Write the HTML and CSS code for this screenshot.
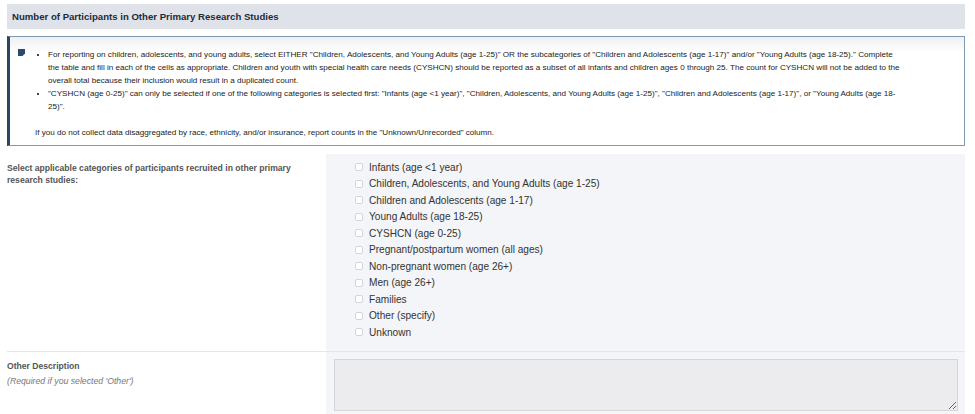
FILE: index.html
```html
<!DOCTYPE html>
<html lang="en">
<head>
  <meta charset="UTF-8">
  <meta name="viewport" content="width=device-width, initial-scale=1.0">
  <title>Number of Participants in Other Primary Research Studies</title>
  <link rel="stylesheet" href="styles.css">
</head>
<body>
  <div class="panel">
    <div class="panel-heading">Number of Participants in Other Primary Research Studies</div>

    <div class="instructions">
      <svg class="note-icon" width="7" height="7" viewBox="0 0 7 7" aria-hidden="true">
        <path d="M0 0H7V4.5L4.5 7H0Z" fill="#2b4a72"/>
      </svg>
      <div class="instructions-body">
        <ul>
          <li>For reporting on children, adolescents, and young adults, select EITHER "Children, Adolescents, and Young Adults (age 1-25)" OR the subcategories of "Children and Adolescents (age 1-17)" and/or "Young Adults (age 18-25)." Complete the table and fill in each of the cells as appropriate. Children and youth with special health care needs (CYSHCN) should be reported as a subset of all infants and children ages 0 through 25. The count for CYSHCN will not be added to the overall total because their inclusion would result in a duplicated count.</li>
          <li>"CYSHCN (age 0-25)" can only be selected if one of the following categories is selected first: "Infants (age &lt;1 year)", "Children, Adolescents, and Young Adults (age 1-25)", "Children and Adolescents (age 1-17)", or "Young Adults (age 18-25)".</li>
        </ul>
        <p>If you do not collect data disaggregated by race, ethnicity, and/or insurance, report counts in the "Unknown/Unrecorded" column.</p>
      </div>
    </div>

    <div class="form-row">
      <div class="form-label">
        <label>Select applicable categories of participants recruited in other primary research studies:</label>
      </div>
      <div class="form-field">
        <label class="check"><input type="checkbox"> Infants (age &lt;1 year)</label>
        <label class="check"><input type="checkbox"> Children, Adolescents, and Young Adults (age 1-25)</label>
        <label class="check"><input type="checkbox"> Children and Adolescents (age 1-17)</label>
        <label class="check"><input type="checkbox"> Young Adults (age 18-25)</label>
        <label class="check"><input type="checkbox"> CYSHCN (age 0-25)</label>
        <label class="check"><input type="checkbox"> Pregnant/postpartum women (all ages)</label>
        <label class="check"><input type="checkbox"> Non-pregnant women (age 26+)</label>
        <label class="check"><input type="checkbox"> Men (age 26+)</label>
        <label class="check"><input type="checkbox"> Families</label>
        <label class="check"><input type="checkbox"> Other (specify)</label>
        <label class="check"><input type="checkbox"> Unknown</label>
      </div>
    </div>

    <div class="form-row bordered">
      <div class="form-label">
        <label>Other Description</label>
        <span class="hint">(Required if you selected 'Other')</span>
      </div>
      <div class="form-field">
        <textarea class="other-text" disabled></textarea>
      </div>
    </div>
  </div>
</body>
</html>
```

FILE: styles.css
```css
body {
  margin: 0;
  padding: 4px 10px 0 7px;
  font-family: "Liberation Sans", Arial, sans-serif;
  color: #333;
  background: #fff;
}

.panel-heading {
  background-color: #dfe2e8;
  color: #1c2b3b;
  font-size: 9.6px;
  font-weight: bold;
  height: 25px;
  line-height: 25px;
  padding-left: 5px;
}

.instructions {
  display: flex;
  margin-top: 7px;
  border: 1.5px solid #7e98ae;
  border-left: 3px solid #2a4660;
  background: linear-gradient(#eef0f2, #fff 16px);
  padding: 11px 63px 6px 8px;
  font-size: 8.1px;
  line-height: 13px;
  color: #222;
}

.note-icon {
  flex: none;
  margin-top: 1px;
}

.instructions-body {
  flex: 1;
  padding-left: 4px;
}

.instructions ul {
  margin: 0;
  padding-left: 19px;
  list-style: square;
}

.instructions li::marker {
  font-size: 7px;
  color: #444;
}

.instructions p {
  margin: 13px 0 0 6px;
}

.form-row {
  display: flex;
  margin-top: 8px;
}

.form-row.bordered {
  margin-top: 0;
  border-top: 1px solid #e4e6ea;
}

.form-label {
  width: 319px;
  flex: none;
  padding-top: 8px;
  padding-right: 20px;
  box-sizing: border-box;
  font-size: 8.6px;
  line-height: 12px;
}

.form-label label {
  display: block;
  font-weight: bold;
  color: #555;
}

.form-label .hint {
  display: block;
  margin-top: 3px;
  font-style: italic;
  color: #777;
  font-size: 8.7px;
}

.form-field {
  flex: 1;
  background-color: #f4f5f8;
  padding: 5px 7px 10px 29px;
}

.bordered .form-field {
  padding: 7px 7px 6px 8px;
}

.check {
  display: flex;
  align-items: center;
  height: 16.5px;
  font-size: 10.1px;
  color: #333;
}

.check input {
  appearance: none;
  width: 8px;
  height: 8px;
  margin: 0 6px 0 0;
  border: 1px solid #d3d5d9;
  border-radius: 2px;
  background: #fff;
}

.other-text {
  display: block;
  width: 100%;
  height: 52px;
  box-sizing: border-box;
  background-color: #ececee;
  border: 1px solid #d4d5d8;
  border-radius: 0;
  resize: vertical;
}
```
